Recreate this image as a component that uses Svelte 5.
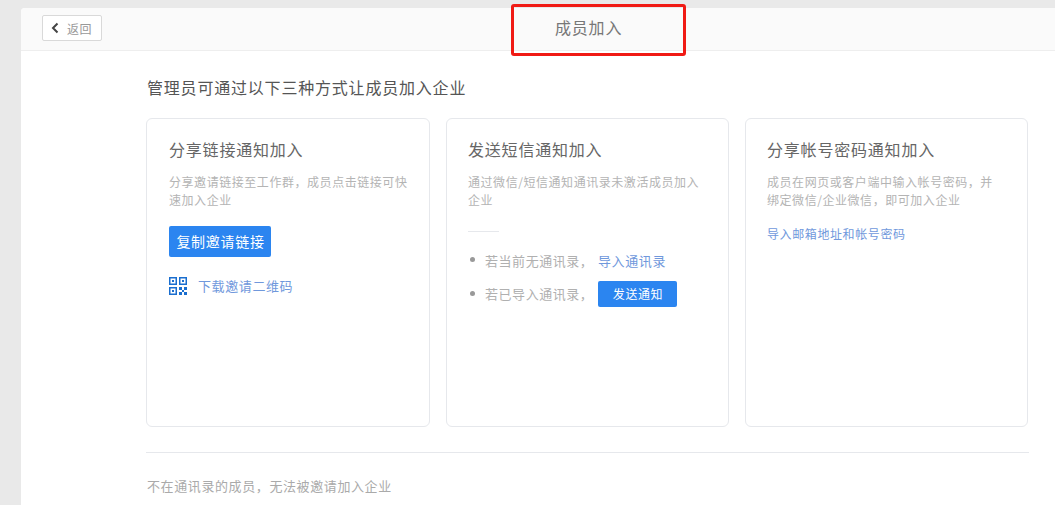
<script>
	const notes = ['不在通讯录的成员\uFF0C无法被邀请加入企业'];
</script>

<div class="page">
	<div class="panel">
		<header class="top">
			<button class="back">
				<svg width="8" height="12" viewBox="0 0 8 12" aria-hidden="true">
					<path d="M6.5 1.5 2 6l4.5 4.5" fill="none" stroke="#444" stroke-width="2" />
				</svg>
				<span>返回</span>
			</button>
			<h1>成员加入</h1>
		</header>

		<main class="body">
			<h2>管理员可通过以下三种方式让成员加入企业</h2>

			<div class="cards">
				<section class="card">
					<h3>分享链接通知加入</h3>
					<p class="desc">分享邀请链接至工作群&#65292;成员点击链接可快速加入企业</p>
					<button class="btn big">复制邀请链接</button>
					<div class="qr-row">
						<svg class="qr" width="18" height="18" viewBox="0 0 18 18" aria-hidden="true">
							<g fill="none" stroke="#1a6ecf" stroke-width="1.5">
								<rect x="0.75" y="0.75" width="6.5" height="6.5" />
								<rect x="10.75" y="0.75" width="6.5" height="6.5" />
								<rect x="0.75" y="10.75" width="6.5" height="6.5" />
							</g>
							<g fill="#1a6ecf">
								<rect x="3" y="3" width="2" height="2" />
								<rect x="13" y="3" width="2" height="2" />
								<rect x="3" y="13" width="2" height="2" />
								<rect x="10" y="10" width="3" height="3" />
								<rect x="15" y="10" width="3" height="3" />
								<rect x="13" y="13" width="2" height="2" />
								<rect x="10" y="15" width="3" height="3" />
								<rect x="15" y="15" width="3" height="3" />
							</g>
						</svg>
						<a href="#qr">下载邀请二维码</a>
					</div>
				</section>

				<section class="card">
					<h3>发送短信通知加入</h3>
					<p class="desc">通过微信/短信通知通讯录未激活成员加入企业</p>
					<div class="short-rule"></div>
					<ul>
						<li>
							<span class="li-text">若当前无通讯录&#65292;</span>
							<a href="#import">导入通讯录</a>
						</li>
						<li class="btn-row">
							<span class="li-text">若已导入通讯录&#65292;</span>
							<button class="btn small">发送通知</button>
						</li>
					</ul>
				</section>

				<section class="card">
					<h3>分享帐号密码通知加入</h3>
					<p class="desc">成员在网页或客户端中输入帐号密码&#65292;并绑定微信/企业微信&#65292;即可加入企业</p>
					<a class="third-link" href="#mail">导入邮箱地址和帐号密码</a>
				</section>
			</div>

			<div class="rule"></div>
			{#each notes as note}
				<p class="note">{note}</p>
			{/each}
		</main>
	</div>

	<div class="mark"></div>
</div>

<style>
	:global(body) {
		margin: 0;
		background: #e9e9e9;
		overflow: hidden;
	}
	.page {
		position: relative;
		height: 505px;
		padding: 8px 0 0 21px;
		box-sizing: border-box;
		overflow: hidden;
		font-family: 'Noto Sans CJK SC', 'Noto Sans', sans-serif;
		letter-spacing: 0.05em;
	}
	.panel {
		height: 497px;
		background: #fff;
		border-radius: 4px 0 0 0;
	}
	.top {
		display: flex;
		align-items: center;
		height: 42px;
		box-sizing: content-box;
		padding-left: 21px;
		background: #fafafa;
		border-bottom: 1px solid #eeeeee;
		border-radius: 4px 0 0 0;
	}
	.back {
		display: flex;
		align-items: center;
		gap: 8px;
		width: 60px;
		height: 26px;
		margin-bottom: 2px;
		padding: 0 0 0 8px;
		box-sizing: border-box;
		background: #fff;
		border: 1px solid #d9d9d9;
		border-radius: 2px;
		font: inherit;
		font-size: 12px;
		letter-spacing: 0.5px;
		color: #999;
	}
	h1 {
		margin: 0 0 4px 453px;
		font-size: 16px;
		font-weight: 400;
		line-height: 38px;
		color: #777;
	}
	.body {
		padding: 24px 27px 0 125px;
	}
	h2 {
		margin: 0 0 19px 1px;
		font-size: 16px;
		font-weight: 400;
		line-height: 24px;
		color: #555;
	}
	.cards {
		display: grid;
		grid-template-columns: 284px 283px 283px;
		gap: 16px;
	}
	.card {
		height: 309px;
		box-sizing: border-box;
		padding: 18px 19px 18px 22px;
		border: 1px solid #e6e8ec;
		border-radius: 6px;
	}
	.card + .card {
		padding-left: 21px;
		padding-right: 24px;
	}
	h3 {
		margin: 0;
		font-size: 16px;
		font-weight: 400;
		line-height: 24px;
		color: #666;
	}
	.desc {
		margin: 12px 0 0;
		font-size: 12px;
		line-height: 18px;
		letter-spacing: 0.55px;
		color: #b4b4b4;
	}
	.btn {
		display: block;
		padding: 0 0 2px 1px;
		background: #2b85f0;
		border: 0;
		border-radius: 2px;
		color: #fff;
		font: inherit;
		letter-spacing: 0.05em;
	}
	.big {
		width: 102px;
		height: 31px;
		margin-top: 17px;
		font-size: 14px;
	}
	.small {
		width: 79px;
		height: 26px;
		font-size: 12px;
	}
	a {
		color: #7098dc;
		text-decoration: none;
		letter-spacing: 0.6px;
	}
	.qr-row {
		display: flex;
		align-items: center;
		gap: 11px;
		margin-top: 20px;
		font-size: 13px;
		line-height: 18px;
	}
	.qr {
		flex: none;
	}
	.short-rule {
		width: 31px;
		height: 1px;
		margin-top: 22px;
		background: #e6e8ec;
	}
	ul {
		margin: 15px 0 0;
		padding: 0;
		list-style: none;
		font-size: 13px;
	}
	li {
		position: relative;
		display: flex;
		align-items: center;
		height: 26px;
		margin-bottom: 8px;
		padding-left: 17px;
	}
	li::before {
		content: '';
		position: absolute;
		left: 2px;
		top: 10px;
		width: 5px;
		height: 5px;
		border-radius: 50%;
		background: #999;
	}
	.li-text {
		width: 113px;
		letter-spacing: 0.55px;
		color: #b0b0b0;
	}
	.btn-row .li-text {
		margin-bottom: 2px;
	}
	.third-link {
		display: block;
		margin-top: 16px;
		font-size: 12px;
		line-height: 18px;
	}
	.rule {
		width: 883px;
		height: 1px;
		margin-top: 25px;
		background: #e6e8ec;
	}
	.note {
		margin: 23px 0 0 1px;
		font-size: 13px;
		line-height: 20px;
		letter-spacing: 0.6px;
		color: #aaa;
	}
	.mark {
		position: absolute;
		left: 511px;
		top: 4px;
		width: 175px;
		height: 52px;
		box-sizing: border-box;
		border: 3px solid #f01a14;
		border-radius: 3px;
	}
</style>
